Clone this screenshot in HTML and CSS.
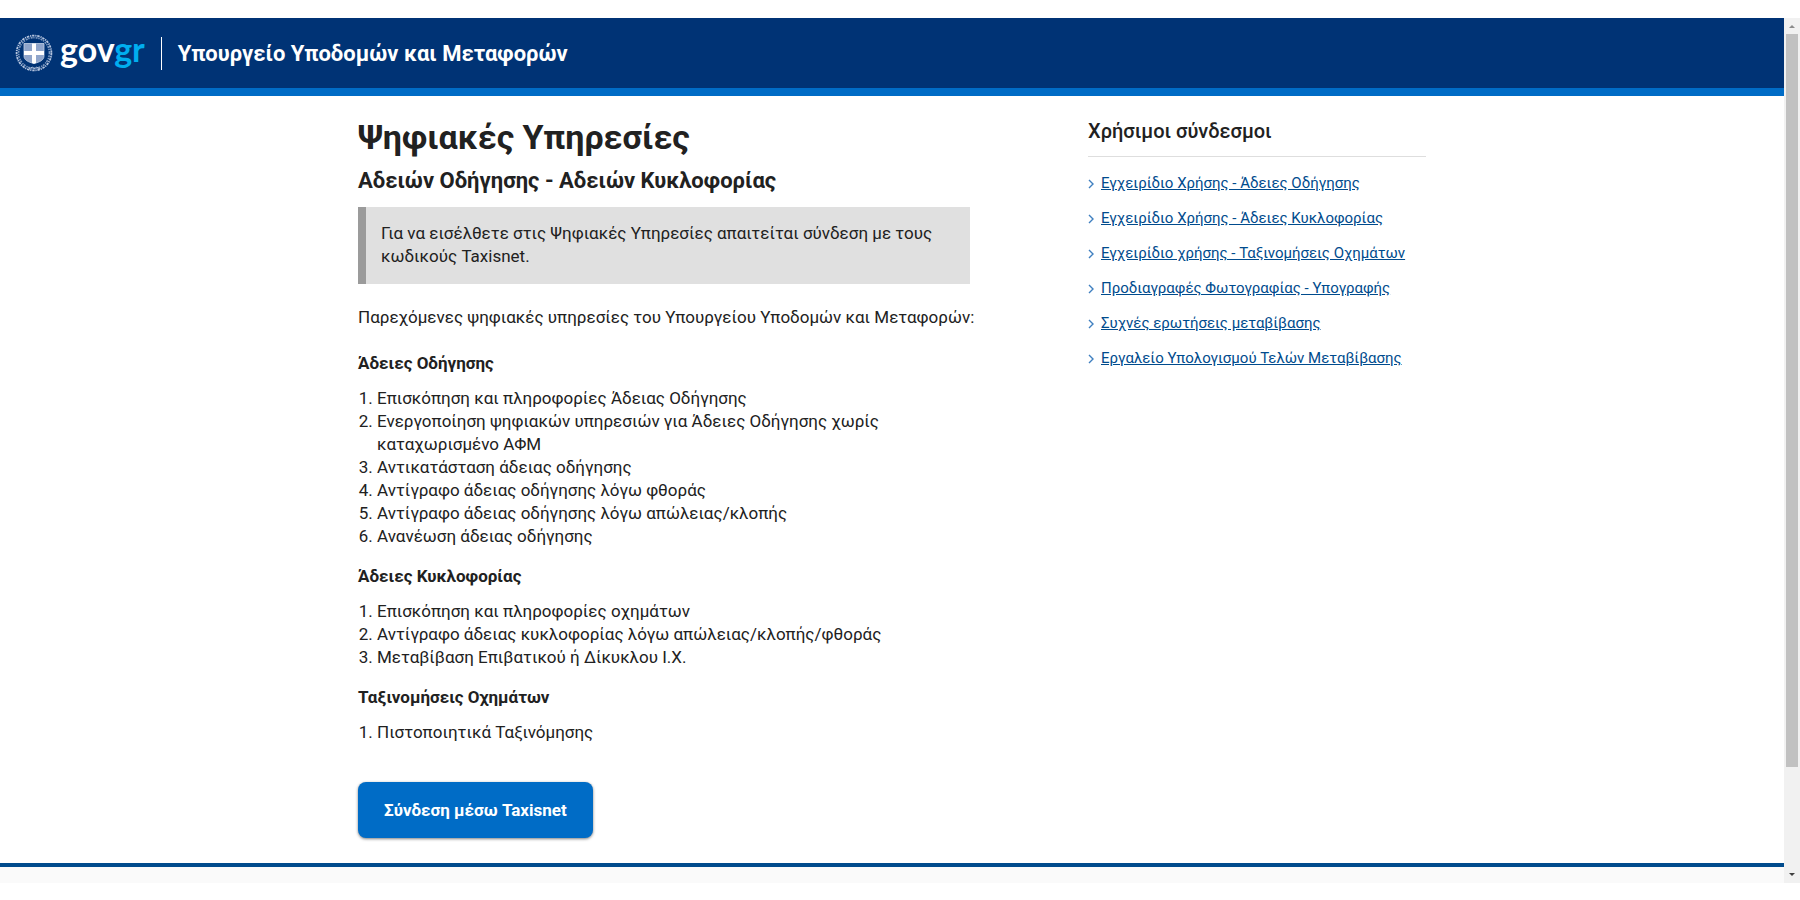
FILE: index.html
```html
<!DOCTYPE html>
<html lang="el">
<head>
<meta charset="utf-8">
<title>Ψηφιακές Υπηρεσίες</title>
<link rel="stylesheet" href="styles.css">
</head>
<body>
<div class="viewport">
  <div class="page">
    <header class="header">
      <div class="brand">
        <svg class="emblem" viewBox="0 0 38 38" aria-hidden="true">
          <g fill="none" stroke="#b4c4de">
            <circle cx="19" cy="19" r="17.4" stroke-width="1.8" stroke-dasharray="2.4 .9 1.2 .8"/>
            <circle cx="19" cy="19" r="15.4" stroke-width="1.6" stroke-dasharray="1.3 1.1 2 .7" opacity=".7"/>
            <path d="M14 35l3.500-2 2 2 2-2 3.500 2" stroke-width="1"/>
          </g>
          <path d="M9 9.500h20V22c0 4-4 6-10 7.500C13 28 9 26 9 22z" fill="#8fa5cb" stroke="#c3d0e4" stroke-width=".8"/>
          <path d="M17 9.500h4V17h8v4h-8v8l-2 .8-2-.8v-8H9v-4h8z" fill="#fff"/>
        </svg>
        <span class="wordmark">gov<span class="wordmark-accent">gr</span></span>
      </div>
      <div class="ministry">Υπουργείο Υποδομών και Μεταφορών</div>
    </header>
    <div class="container">
      <main class="main">
        <h1 class="title">Ψηφιακές Υπηρεσίες</h1>
        <h2 class="subtitle">Αδειών Οδήγησης - Αδειών Κυκλοφορίας</h2>
        <p class="notice">Για να εισέλθετε στις Ψηφιακές Υπηρεσίες απαιτείται σύνδεση με τους κωδικούς Taxisnet.</p>
        <p class="intro">Παρεχόμενες ψηφιακές υπηρεσίες του Υπουργείου Υποδομών και Μεταφορών:</p>
        <h3 class="section-title">Άδειες Οδήγησης</h3>
        <ol class="services">
          <li>Επισκόπηση και πληροφορίες Άδειας Οδήγησης</li>
          <li>Ενεργοποίηση ψηφιακών υπηρεσιών για Άδειες Οδήγησης χωρίς καταχωρισμένο ΑΦΜ</li>
          <li>Αντικατάσταση άδειας οδήγησης</li>
          <li>Αντίγραφο άδειας οδήγησης λόγω φθοράς</li>
          <li>Αντίγραφο άδειας οδήγησης λόγω απώλειας/κλοπής</li>
          <li>Ανανέωση άδειας οδήγησης</li>
        </ol>
        <h3 class="section-title">Άδειες Κυκλοφορίας</h3>
        <ol class="services">
          <li>Επισκόπηση και πληροφορίες οχημάτων</li>
          <li>Αντίγραφο άδειας κυκλοφορίας λόγω απώλειας/κλοπής/φθοράς</li>
          <li>Μεταβίβαση Επιβατικού ή Δίκυκλου Ι.Χ.</li>
        </ol>
        <h3 class="section-title">Ταξινομήσεις Οχημάτων</h3>
        <ol class="services">
          <li>Πιστοποιητικά Ταξινόμησης</li>
        </ol>
        <button class="login" type="button">Σύνδεση μέσω Taxisnet</button>
      </main>
      <aside class="aside">
        <h2 class="aside-title">Χρήσιμοι σύνδεσμοι</h2>
        <ul class="links">
          <li><svg class="chevron" viewBox="0 0 6 10" aria-hidden="true"><path d="M1 1l4 4-4 4"/></svg><a href="#">Εγχειρίδιο Χρήσης - Άδειες Οδήγησης</a></li>
          <li><svg class="chevron" viewBox="0 0 6 10" aria-hidden="true"><path d="M1 1l4 4-4 4"/></svg><a href="#">Εγχειρίδιο Χρήσης - Άδειες Κυκλοφορίας</a></li>
          <li><svg class="chevron" viewBox="0 0 6 10" aria-hidden="true"><path d="M1 1l4 4-4 4"/></svg><a href="#">Εγχειρίδιο χρήσης - Ταξινομήσεις Οχημάτων</a></li>
          <li><svg class="chevron" viewBox="0 0 6 10" aria-hidden="true"><path d="M1 1l4 4-4 4"/></svg><a href="#">Προδιαγραφές Φωτογραφίας - Υπογραφής</a></li>
          <li><svg class="chevron" viewBox="0 0 6 10" aria-hidden="true"><path d="M1 1l4 4-4 4"/></svg><a href="#">Συχνές ερωτήσεις μεταβίβασης</a></li>
          <li><svg class="chevron" viewBox="0 0 6 10" aria-hidden="true"><path d="M1 1l4 4-4 4"/></svg><a href="#">Εργαλείο Υπολογισμού Τελών Μεταβίβασης</a></li>
        </ul>
      </aside>
    </div>
    <footer class="footer"></footer>
  </div>
  <div class="scrollbar" aria-hidden="true">
    <svg class="arrow" viewBox="0 0 16 16"><path d="M5 10l3-3 3 3z" fill="#8b8b8b"/></svg>
    <div class="track"><div class="thumb"></div></div>
    <svg class="arrow" viewBox="0 0 16 16"><path d="M5 6l3 3 3-3z" fill="#404040"/></svg>
  </div>
</div>
</body>
</html>
```
FILE: styles.css
```css
* { box-sizing: border-box; }

body {
  margin: 0;
  padding: 18px 0 17px;
  min-height: 100vh;
  display: flex;
  flex-direction: column;
  background: #fff;
  color: #212121;
  font: 17px/23px Roboto, "Noto Sans", sans-serif;
}

h1, h2, h3, p, ol, ul { margin: 0; padding: 0; }

.viewport { flex: 1; display: flex; }
.page { flex: 1; min-width: 0; display: flex; flex-direction: column; }

.header {
  display: flex;
  align-items: center;
  min-height: 78px;
  padding-left: 15px;
  background: #003375;
  border-bottom: 8px solid #006cc6;
  color: #fff;
}

.brand {
  display: flex;
  align-items: center;
  gap: 7px;
  padding-right: 16px;
  border-right: 1px solid #fff;
  height: 33px;
}
.emblem { width: 38px; height: 38px; flex: none; }
.wordmark { font: 700 34px/40px Lato, sans-serif; padding-bottom: 9px; }
.wordmark-accent { color: #00aeef; }
.ministry { padding: 2px 0 0 16px; font-size: 22px; line-height: 28px; font-weight: 700; }

.container {
  width: 100%;
  max-width: 1068px;
  margin: 0 auto;
  padding: 19px 0 25px;
  display: flex;
  justify-content: space-between;
  gap: 24px;
}
.main { flex: 0 1 620px; }
.aside { flex: 0 1 338px; }

.title { font-size: 34px; line-height: 44px; font-weight: 700; }
.subtitle { margin-top: 7px; font-size: 22px; line-height: 30px; font-weight: 700; }
.notice {
  max-width: 612px;
  margin-top: 11px;
  padding: 15px 15px 16px 15px;
  border-left: 8px solid #9b9b9b;
  background: #e0e0e0;
}
.intro { margin-top: 22px; }
.section-title { margin-top: 17px; font-size: 17px; line-height: 23px; font-weight: 700; }
.intro + .section-title { margin-top: 23px; }

.services { margin-top: 12px; padding-left: 19px; max-width: 612px; }
.login {
  margin-top: 38px;
  padding: 16px 26px;
  border: 0;
  border-radius: 8px;
  background: #006cc6;
  box-shadow: 0 1px 3px #00000080;
  color: #fff;
  font: 700 17px/24px Roboto, sans-serif;
}

.aside-title {
  padding: 4px 0 13px;
  border-bottom: 1px solid #dedede;
  font-size: 20px;
  line-height: 24px;
  font-weight: 500;
}
.links { display: grid; gap: 12px; margin-top: 15px; list-style: none; font-size: 15px; }
.links li { display: flex; align-items: center; gap: 7px; }
.links a { color: #004b8d; }
.chevron { width: 6px; height: 10px; flex: none; fill: none; stroke: #3f7fc0; stroke-width: 1.4; }

.footer { flex: 1; min-height: 20px; border-top: 4px solid #004b8d; background: #fafafa; }

.scrollbar { flex: 0 0 16px; display: flex; flex-direction: column; background: #f1f1f1; }
.arrow { width: 16px; height: 16px; }
.track { flex: 1; padding: 0 2px; }
.thumb { height: 88%; background: #c1c1c1; }
```
